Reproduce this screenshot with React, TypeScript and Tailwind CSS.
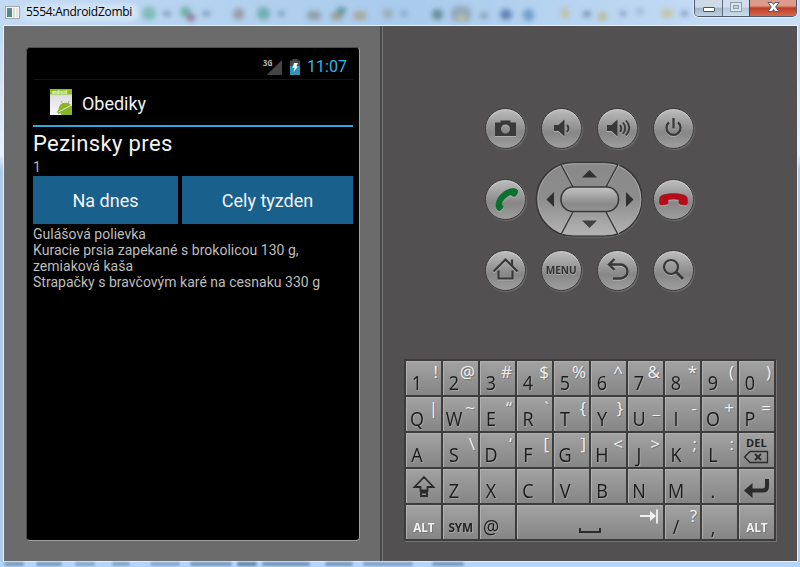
import React from "react";

const INK = "#2b2b2b";

type Blob = { x: number; y: number; w: number; h: number; c: string };

// Toolbar of the window behind, seen through the glass frame
const topBlobs: Blob[] = [
  { x: 22, y: 4, w: 116, h: 17, c: "#d3e5f7" },
  { x: 142, y: 7, w: 14, h: 13, c: "#7fbcb6" },
  { x: 163, y: 11, w: 8, h: 5, c: "#7d99b8" },
  { x: 180, y: 7, w: 11, h: 10, c: "#6fb0a2" },
  { x: 187, y: 14, w: 8, h: 7, c: "#93739a" },
  { x: 202, y: 11, w: 8, h: 5, c: "#7d99b8" },
  { x: 233, y: 8, w: 11, h: 12, c: "#9a9ca8" },
  { x: 257, y: 7, w: 13, h: 13, c: "#73aeb0" },
  { x: 278, y: 11, w: 7, h: 5, c: "#7d99b8" },
  { x: 307, y: 11, w: 14, h: 9, c: "#8d9fa6" },
  { x: 331, y: 12, w: 12, h: 8, c: "#9a9d94" },
  { x: 337, y: 7, w: 9, h: 7, c: "#5f98a0" },
  { x: 353, y: 11, w: 14, h: 9, c: "#a7aa9f" },
  { x: 383, y: 9, w: 10, h: 9, c: "#9aaab5" },
  { x: 401, y: 11, w: 6, h: 5, c: "#7d99b8" },
  { x: 432, y: 9, w: 11, h: 11, c: "#668f9b" },
  { x: 451, y: 6, w: 20, h: 16, c: "#93a9bc" },
  { x: 457, y: 15, w: 9, h: 6, c: "#b9c29c" },
  { x: 480, y: 12, w: 8, h: 7, c: "#8ba2b8" },
  { x: 500, y: 9, w: 12, h: 11, c: "#6485b4" },
  { x: 523, y: 9, w: 11, h: 12, c: "#6f9fcb" },
  { x: 561, y: 8, w: 8, h: 10, c: "#c2bfa3" },
  { x: 583, y: 11, w: 8, h: 6, c: "#7591b2" },
  { x: 598, y: 12, w: 9, h: 9, c: "#bdb99b" },
  { x: 620, y: 11, w: 6, h: 5, c: "#7d99b8" },
  { x: 636, y: 9, w: 8, h: 5, c: "#9db3cd" },
  { x: 661, y: 9, w: 12, h: 9, c: "#c4c5a9" },
  { x: 681, y: 11, w: 7, h: 5, c: "#7d99b8" },
];

const bottomBlobs: Blob[] = [
  { x: 4, y: 0, w: 20, h: 4, c: "#7d9dbc" },
  { x: 36, y: 0, w: 26, h: 4, c: "#7e9ebe" },
  { x: 75, y: 0, w: 20, h: 4, c: "#8aaaca" },
  { x: 112, y: 0, w: 18, h: 4, c: "#86a6c6" },
  { x: 150, y: 0, w: 30, h: 4, c: "#8aaacc" },
  { x: 190, y: 0, w: 42, h: 4, c: "#7b9bbb" },
  { x: 237, y: 0, w: 20, h: 4, c: "#6888a8" },
  { x: 262, y: 0, w: 48, h: 4, c: "#7797b8" },
  { x: 325, y: 0, w: 28, h: 4, c: "#7b9bbb" },
  { x: 363, y: 0, w: 50, h: 4, c: "#84a4c5" },
  { x: 432, y: 0, w: 32, h: 4, c: "#7c9cbd" },
];

function Blobs({ items, blur }: { items: Blob[]; blur: string }) {
  return (
    <div className={"pointer-events-none absolute inset-0 overflow-hidden " + blur}>
      {items.map((b, i) => (
        <span
          key={i}
          className="absolute rounded-md"
          style={{ left: b.x, top: b.y, width: b.w, height: b.h, background: b.c }}
        />
      ))}
    </div>
  );
}

function TitleBar() {
  return (
    <header className="relative flex h-[25px] shrink-0 items-start justify-between bg-linear-to-r from-[#c2daf3] via-[#a9cbec] to-[#cbdff5]">
      <Blobs items={topBlobs} blur="blur-[2.5px]" />
      <div className="relative flex items-center pt-[3px] pl-[5px]">
        <svg width="15" height="13" viewBox="0 0 15 13">
          <rect x=".5" y=".5" width="14" height="12" fill="#f6f6f6" stroke="#a5aab0" />
          <rect x="2" y="2" width="5" height="9" fill="#4b8d83" />
          <rect x="2" y="2" width="5" height="3" fill="#5d86a0" />
          <rect x="8" y="2" width="2" height="9" fill="#dadada" />
          <rect x="11" y="2" width="2" height="9" fill="#e4e4e4" />
        </svg>
        <span className="ml-[6px] font-['Open_Sans','Noto_Sans',sans-serif] text-[12px] leading-[18px] tracking-[-0.29px] text-black">
          5554:AndroidZombi
        </span>
      </div>
      <div className="relative mr-[3px] flex h-[17px] w-[103px] overflow-hidden rounded-b-[5px] border border-t-0 border-[#4b5a6d] shadow-[0_0_0_1px_#e3effb]">
        <div className="flex w-[28px] items-center justify-center border-r border-[#5c6b7e] bg-linear-to-b from-[#cfdae7] from-45% via-[#a4b5c8] via-50% to-[#c0d0e1]">
          <span className="mt-[3px] h-[5px] w-[12px] rounded-[1px] border border-[#4a5563] bg-white" />
        </div>
        <div className="flex w-[27px] items-center justify-center border-r border-[#5c3a3c] bg-linear-to-b from-[#cfdded] from-45% via-[#b4c7dc] via-50% to-[#cbdbec]">
          <svg className="mt-[-3px]" width="12" height="10" viewBox="0 0 12 10">
            <rect x=".5" y=".5" width="11" height="9" fill="#dce6f0" stroke="#8d9bab" />
            <rect x="3.5" y="3.5" width="5" height="3" fill="#c3d2e2" stroke="#8d9bab" />
          </svg>
        </div>
        <div className="flex flex-1 items-start justify-center bg-linear-to-b from-[#dd9a8c] from-35% via-[#bf3b25] via-50% to-[#d26a4e]">
          <svg className="mt-px" width="13" height="12" viewBox="0 0 13 12">
            <path
              d="M1 1.500h4l1.500 2 1.500-2h4L8.700 6l3.300 4.500H8l-1.500-2-1.500 2H1L4.300 6z"
              fill="#fff"
              stroke="#515766"
              strokeWidth="1"
            />
          </svg>
        </div>
      </div>
    </header>
  );
}

function PhoneScreen() {
  return (
    <section className="flex w-[376px] shrink-0 flex-col bg-[#6b6b6b] pt-[21px] pl-[22px]">
      <div className="h-[494px] w-[334px] rounded-[4px] border border-t-[#4c4c4c] border-r-[#a0a0a0] border-b-[#a0a0a0] border-l-[#4c4c4c] bg-black px-[6px] pt-[7px] font-[Roboto,'Noto_Sans',sans-serif]">
        <div className="flex h-[25px] items-center justify-end border-b border-[#141414] pr-[6px]">
          <svg className="overflow-visible" width="19" height="22" viewBox="0 -3 19 22">
            <path d="M19 1v15H3.500z" fill="#444" />
            <text x="0" y="7" fontSize="8.500" fontWeight="700" fill="#b9b9b9" fontFamily="Open Sans" textLength="9.500" lengthAdjust="spacingAndGlyphs">
              3G
            </text>
          </svg>
          <svg className="ml-[8px]" width="10" height="16" viewBox="0 0 10 16">
            <path d="M2.500 0h5v1.500H10V16H0V1.500h2.500z" fill="#484848" />
            <path d="M0 7h10v9H0z" fill="#2f95b8" />
            <path d="M4 4h4L6.500 7.500H8L3.500 13l1-4H2.500z" fill="#f1f5f6" />
          </svg>
          <span className="ml-[7px] text-[16px] leading-[20px] tracking-[0.05px] text-[#33b5e5]">11:07</span>
        </div>
        <div className="flex h-[47px] items-center border-b-2 border-[#33a7dc] pl-[16px]">
          <svg width="24" height="27" viewBox="0 0 24 27">
            <defs>
              <linearGradient id="paper" x1="0" y1="0" x2="0" y2="1">
                <stop offset="0" stopColor="#d5d5d9" />
                <stop offset="1" stopColor="#fafafa" />
              </linearGradient>
            </defs>
            <path d="M1 0h22v26H1z" fill="url(#paper)" />
            <path d="M1 0h22v5.500H1z" fill="#8fbe22" />
            <text x="3" y="5" fontSize="6" fontWeight="700" fill="#f1f8df" fontFamily="Roboto" textLength="15" lengthAdjust="spacingAndGlyphs">android</text>
            <path d="M9.500 20.500c.5-4.500 3-6.500 6.500-6.800 3-.2 5.500 1 7 3.300v9H12.500l-1-2-2 1-1.500-2z" fill="#8ab42a" />
            <path d="M9.500 23 23 15.800" stroke="#e4efd0" strokeWidth=".9" />
            <path d="m12 12 1.800 2.700M20 12l-1 2.500" stroke="#8ab42a" strokeWidth=".8" />
          </svg>
          <span className="ml-[9px] pt-[3px] text-[18px] leading-6 tracking-[-0.02px] text-[#f1f1f1]">Obediky</span>
        </div>
        <h1 className="pt-[3px] text-[22px] leading-[28px] font-normal tracking-[0.38px] text-[#f3f3f3]">Pezinsky pres</h1>
        <p className="text-[14px] leading-[18px] text-[#b2b2b2]">1</p>
        <div className="flex h-[48px] gap-[4px] text-[18px] text-[#f3f3f3]">
          <button className="w-[145px] bg-[#19608c] pt-px">Na dnes</button>
          <button className="w-[171px] bg-[#19608c] pt-px">Cely tyzden</button>
        </div>
        <div className="pt-[2px] text-[14px] leading-[16px] tracking-[0.02px] whitespace-nowrap text-[#bdbdbd]">
          <p>Gulášová polievka</p>
          <p>Kuracie prsia zapekané s brokolicou 130 g,</p>
          <p>zemiaková kaša</p>
          <p>Strapačky s bravčovým karé na cesnaku 330 g</p>
        </div>
      </div>
    </section>
  );
}

function Round({ children }: { children: React.ReactNode }) {
  return (
    <button className="flex size-[41px] items-center justify-center rounded-full border-[1.500px] border-[#3a3939] bg-[#8a8a8a] bg-linear-to-b from-[#c0c0c0] via-[#878787] via-60% to-[#a0a0a0] bg-origin-border shadow-[1px_1px_1px_#6d6c6c,inset_0_1px_1px_#cfcfcf]">
      {children}
    </button>
  );
}

function Icon({ children }: { children: React.ReactNode }) {
  return (
    <svg
      width="39"
      height="39"
      viewBox="0 0 39 39"
      fill="none"
      stroke="#383838"
      strokeWidth="2.400"
      className="shrink-0 drop-shadow-[0_1px_0_#b0b0b0]"
    >
      {children}
    </svg>
  );
}

function DPad() {
  return (
    <svg className="shrink-0" width="109" height="77" viewBox="0 0 109 77">
      <defs>
        <linearGradient id="ring" x1="0" y1="0" x2="0" y2="1">
          <stop offset="0" stopColor="#898989" />
          <stop offset=".5" stopColor="#8d8d8d" />
          <stop offset="1" stopColor="#b5b5b5" />
        </linearGradient>
        <linearGradient id="pill" x1="0" y1="0" x2="0" y2="1">
          <stop offset="0" stopColor="#c4c4c4" />
          <stop offset=".7" stopColor="#898989" />
          <stop offset="1" stopColor="#959595" />
        </linearGradient>
      </defs>
      <rect x="2" y="2.500" width="106" height="74" rx="37" fill="#777" />
      <rect x="1.500" y="1.500" width="105.500" height="73.500" rx="36.500" fill="url(#ring)" stroke="#383838" strokeWidth="1.600" />
      <rect x="2.800" y="2.800" width="103" height="71" rx="35.500" fill="none" stroke="#adadad" strokeWidth=".8" />
      <path d="M26 3.500 37 24M83 3.500 72 24M26 73.500 37 52M83 73.500 72 52" stroke="#b2b2b2" strokeWidth="1" transform="translate(1 0)" />
      <path d="M26 3.500 38 26M83 3.500 71 26M26 73.500 38 51M83 73.500 71 51" stroke="#383838" strokeWidth="1.400" />
      <rect x="26" y="26" width="57.500" height="24.500" rx="12" fill="url(#pill)" stroke="#383838" strokeWidth="1.600" />
      <path d="M47 16.500 54.500 9 62 16.500z" fill="#303030" />
      <path d="M47 59.500 54.500 67 62 59.500z" fill="#414141" />
      <path d="M19 31v15l-7.500-7.500z" fill="#303030" />
      <path d="M91 31v15l7.500-7.500z" fill="#303030" />
    </svg>
  );
}

function Controls() {
  return (
    <div className="ml-[102px] grid w-[209px] grid-cols-[repeat(4,41px)] grid-rows-[repeat(3,41px)] gap-x-[15px] gap-y-[30px]">
      <Round>
        <Icon>
          <path
            d="M9 13.500h5.500v-2h10v2H30V27H9zM19.500 15.500a4.500 4.500 0 1 0 0 9 4.500 4.500 0 0 0 0-9z"
            fill="#393939"
            fillRule="evenodd"
            stroke="none"
          />
        </Icon>
      </Round>
      <Round>
        <Icon>
          <path d="M12 16h4.500l6-5.500v17l-6-5.500H12z" fill="#383838" stroke="none" />
          <path d="M25 16q3 3.500 0 7" strokeWidth="2" />
        </Icon>
      </Round>
      <Round>
        <Icon>
          <path d="M9 16h4.500l6-5.500v17l-6-5.500H9z" fill="#383838" stroke="none" />
          <path d="M22 16q2.500 3.500 0 7M25 13.500q4.500 5.500 0 11.500M28 11.500q6.500 7.500 0 15" strokeWidth="1.900" />
        </Icon>
      </Round>
      <Round>
        <Icon>
          <path d="M15 13.500a7 7 0 1 0 9 0M19.500 9v10.500" strokeWidth="2.300" />
        </Icon>
      </Round>
      <Round>
        <Icon>
          <path
            d="M30.500 9.500c2 1 1.500 2.500.5 4.500s-2 2.800-4 2.200l-2.500-1.400c-4 1.500-8 5.700-9 9.200l1.500 2c.5 1.500-1 3.500-3 4.500-1.500.8-3.200-.8-4-3.500C9 19 17 9.500 26.500 8.500c1.500-.1 3 .2 4 1z"
            fill="#09712b"
            stroke="#0b6026"
            strokeWidth=".6"
          />
        </Icon>
      </Round>
      <div className="col-span-2 flex h-[41px] items-center justify-center">
        <DPad />
      </div>
      <Round>
        <Icon>
          <path
            d="M5.500 20c0-3.500 2-4.500 4.500-5.200 6-1.600 13-1.600 19 0 3 .7 4.500 2 4.500 5.200v3c0 1.500-.7 2-2.500 2l-4-.5c-1.500-.2-2-.8-2-2v-2.700c-4-1-7-1-11 0v2.700c0 1.200-.5 1.800-2 2l-4 .5c-1.800 0-2.500-.5-2.500-2z"
            fill="#b70d18"
            stroke="#8f161c"
            strokeWidth=".6"
          />
        </Icon>
      </Round>
      <Round>
        <Icon>
          <path d="M7.500 20.500 19.500 8.500 31.500 20.500M26 14.500V8.500M12.500 19.500v8h14v-8" strokeWidth="2.200" />
        </Icon>
      </Round>
      <Round>
        <span className="scale-x-[0.96] font-['Open_Sans','Noto_Sans',sans-serif] text-[10.500px] leading-none font-bold text-[#333] [text-shadow:0_1px_0_#aaa]">
          MENU
        </span>
      </Round>
      <Round>
        <Icon>
          <path d="M16.500 8 11 13.500l5.500 5.500M11 13.500h11.500a7 7 0 0 1 0 14H15" />
        </Icon>
      </Round>
      <Round>
        <Icon>
          <circle cx="17" cy="16" r="7" strokeWidth="2.200" />
          <path d="m22 21 7 7" strokeWidth="2.800" />
        </Icon>
      </Round>
    </div>
  );
}

const keyFace =
  "grid h-[34px] grid-cols-[100%] grid-rows-[100%] overflow-hidden bg-linear-to-b from-[#a2a2a2] to-[#868686] shadow-[inset_1px_1px_0_#b0b0b0]";

function Key({ main, alt }: { main: string; alt?: string }) {
  return (
    <div className={keyFace}>
      <span className="col-start-1 row-start-1 flex w-[22px] scale-x-90 justify-center pt-[8px] text-[20px] leading-[27px] text-[#1c1c1c] [text-shadow:1px_1px_0_#a2a2a2]">
        {main}
      </span>
      {alt && (
        <span className="col-start-1 row-start-1 justify-self-end pr-[3px] text-[17px] leading-[22px] text-[#f0f0f0] [text-shadow:1px_1px_0_#777]">
          {alt}
        </span>
      )}
    </div>
  );
}

function WordKey({ label, light }: { label: string; light?: boolean }) {
  return (
    <div className={keyFace}>
      <span
        className={
          "flex justify-center pt-[13px] text-[13px] leading-[18px] font-bold " +
          (light ? "text-[#f1f1f1] [text-shadow:1px_1px_0_#777]" : "text-[#262626] [text-shadow:1px_1px_0_#a2a2a2]")
        }
      >
        <span className="scale-x-90">{label}</span>
      </span>
    </div>
  );
}

const letterKeys: [string, string?][] = [
  ["1", "!"], ["2", "@"], ["3", "#"], ["4", "$"], ["5", "%"], ["6", "^"], ["7", "&"], ["8", "*"], ["9", "("], ["0", ")"],
  ["Q", "|"], ["W", "~"], ["E", "“"], ["R", "`"], ["T", "{"], ["Y", "}"], ["U", "_"], ["I", "-"], ["O", "+"], ["P", "="],
  ["A"], ["S", "\\"], ["D", "‘"], ["F", "["], ["G", "]"], ["H", "<"], ["J", ">"], ["K", ";"], ["L", ":"],
];

function Keyboard() {
  return (
    <div className="ml-[21px] grid w-[372px] grid-cols-[repeat(10,35px)] gap-[2px] border-2 border-r-0 border-[#3d3c3c] bg-[#3d3c3c] font-['Open_Sans','Noto_Sans',sans-serif] shadow-[1px_1px_0_#747373]">
      {letterKeys.map(([m, a]) => (
        <Key key={m} main={m} alt={a} />
      ))}
      <div className={keyFace}>
        <div className="flex flex-col items-center pt-[4px]">
          <span className="text-[11px] leading-[12px] font-bold tracking-[0.1px] text-[#262626]">DEL</span>
          <svg className="mt-px ml-[-2px]" width="26" height="14" viewBox="0 0 26 14" fill="none" stroke={INK}>
            <path d="M1.500 7 7 1.500h17.500v11H7z" strokeWidth="1.300" />
            <path d="m12 4 6 6M18 4l-6 6" strokeWidth="1.900" />
          </svg>
        </div>
      </div>
      <div className={keyFace}>
        <svg width="35" height="34" viewBox="0 0 35 34" fill="none" stroke={INK} strokeWidth="1.800">
          <path d="M18 8 27.500 18h-6v3.500h-7V18H8.500zM15 23.500h6v3.500h-6z" />
        </svg>
      </div>
      {["Z", "X", "C", "V", "B", "N", "M", "."].map((k) => (
        <Key key={k} main={k} />
      ))}
      <div className={keyFace}>
        <svg width="35" height="34" viewBox="0 0 35 34" fill="none">
          <path d="M28 10v7.500q0 4-4 4H12" stroke={INK} strokeWidth="4" />
          <path d="M5 21.500 13.500 14v15z" fill={INK} />
        </svg>
      </div>
      <WordKey label="ALT" light />
      <WordKey label="SYM" />
      <Key main="@" />
      <div className={keyFace + " col-span-4"}>
        <svg width="146" height="34" viewBox="0 0 146 34" fill="none">
          <path d="M63 23v4h20v-4" stroke={INK} strokeWidth="2" />
          <path d="M123 11h13M140 4.500v14" stroke="#f2f2f2" strokeWidth="1.800" />
          <path d="m133 6 6 5-6 5z" fill="#f2f2f2" />
        </svg>
      </div>
      <Key main="/" alt="?" />
      <Key main="," />
      <WordKey label="ALT" light />
    </div>
  );
}

export default function App() {
  return (
    <div className="flex h-[567px] w-[800px] flex-col overflow-hidden bg-[#b6d5f5]">
      <TitleBar />
      <main className="flex h-[537px] shrink-0 bg-linear-to-b from-[#bed8f0] from-0% via-[#e8f2fb] via-24% to-[#aecbe9] to-27% pr-[2px] pl-[3px]">
        <div className="flex w-[795px] border border-[#e6f1fb] bg-[#525050]">
          <PhoneScreen />
          <div className="w-[3px] shrink-0 border-r border-[#777] bg-[#484848]" />
          <section className="flex flex-1 flex-col bg-[#525050] pt-[82px]">
            <Controls />
            <div className="h-[68px] shrink-0" />
            <Keyboard />
          </section>
        </div>
      </main>
      <footer className="relative h-[5px] shrink-0 bg-[#b5d6f8]">
        <Blobs items={bottomBlobs} blur="blur-[1px]" />
      </footer>
    </div>
  );
}
